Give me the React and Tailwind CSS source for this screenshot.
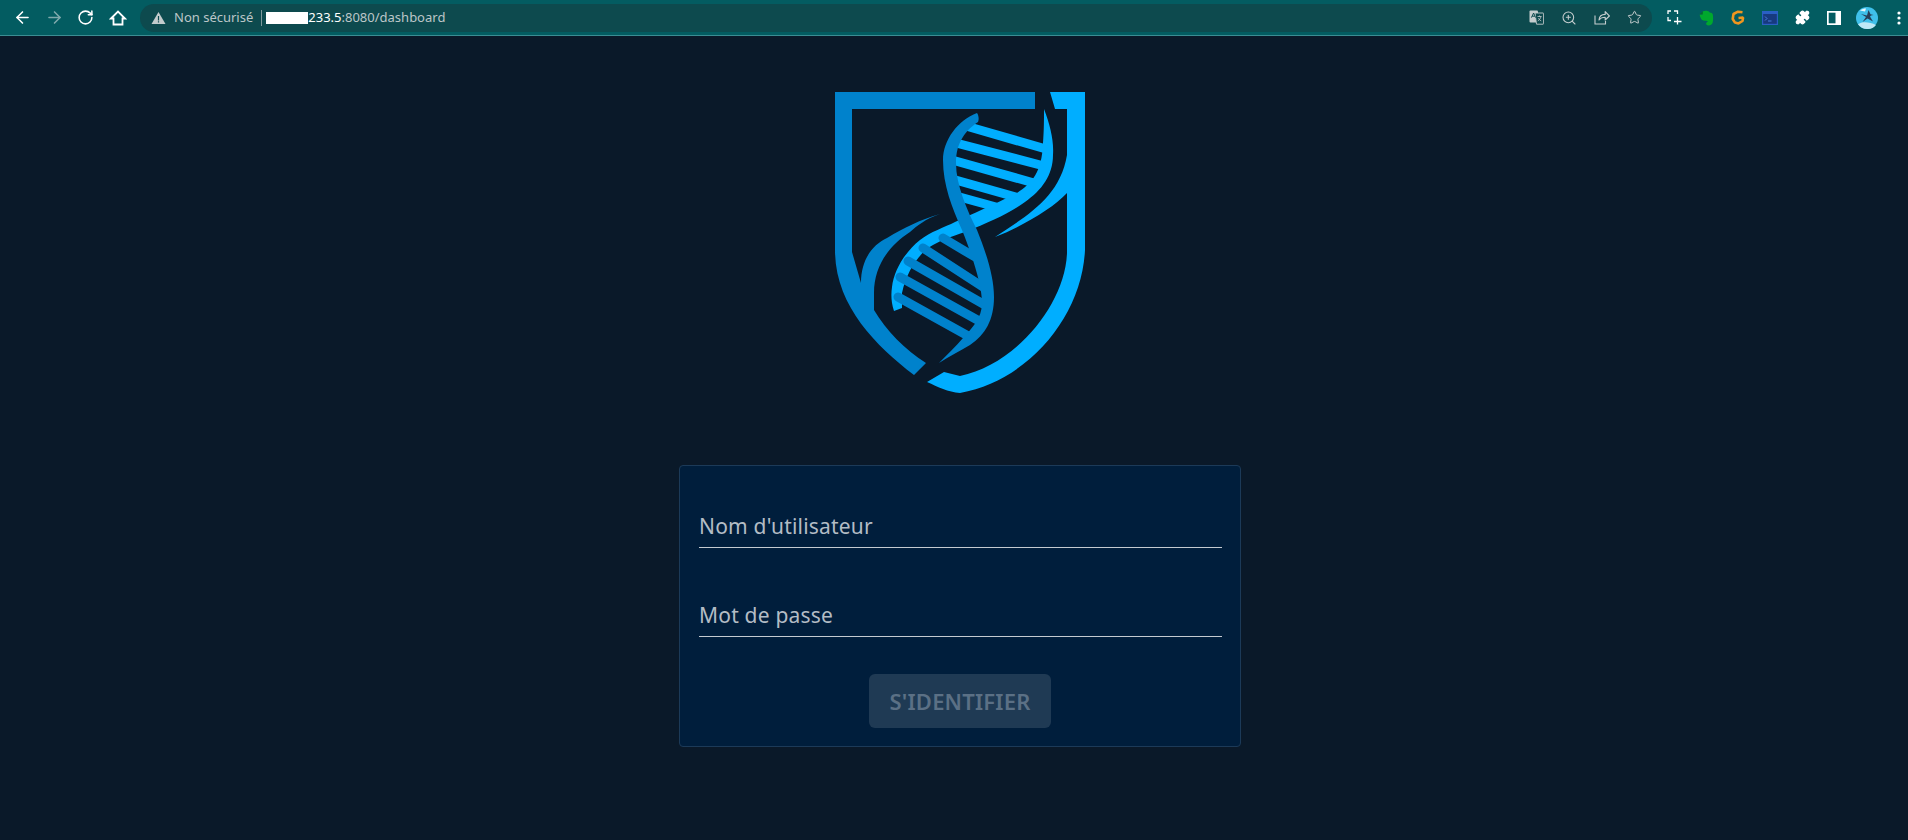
// Login screen inside a Chrome window: toolbar on top, logo and sign-in card below.
import { ArrowLeft, ArrowRight, RotateCw, Star, ZoomIn, Puzzle } from 'lucide-react'

function HomeIcon() {
  return (
    <svg width="18" height="18" viewBox="0 0 18 18" fill="none" stroke="white" strokeWidth="1.8">
      <path d="M2 9.5 9 2.5l7 7h-2.5v6h-9v-6z" strokeLinejoin="miter" />
    </svg>
  )
}

function WarningIcon() {
  return (
    <svg width="15" height="14" viewBox="0 0 15 14">
      <path d="M7.5 1 14.5 13H.5z" fill="#c3cbcc" />
      <path d="M6.9 5h1.2v4.4H6.9zM6.9 10.2h1.2v1.2H6.9z" fill="#0d4a4e" />
    </svg>
  )
}

function TranslateIcon() {
  return (
    <svg width="15" height="15" viewBox="0 0 15 15">
      <rect x="0.5" y="0.5" width="8.5" height="12" rx="1" fill="#c5cdce" />
      <path d="M6 3h8a.6.6 0 0 1 .6.6v10a.6.6 0 0 1-.6.6H7.5z" fill="#0d4a4e" stroke="#c5cdce" strokeWidth="0.9" />
      <path d="M2.4 7.6 4.6 3l2 4.6M3.2 6.2h2.6" fill="none" stroke="#0d4a4e" strokeWidth="1" />
      <path d="M8.5 6.5h4M10.5 5.5v1M12 6.5c-.4 2-1.8 3.6-3.2 4.4M9.4 8.2c.6 1.2 1.6 2.2 2.8 2.7" fill="none" stroke="#c5cdce" strokeWidth="0.8" />
    </svg>
  )
}

function ShareIcon() {
  return (
    <svg width="16" height="15" viewBox="0 0 16 15" fill="none" stroke="#c5cdce" strokeWidth="1.1">
      <path d="M1 5.5V14h10.5v-3" />
      <path d="M5 10c.3-3.6 3-5.6 6.2-5.6V1.6L15.4 6l-4.2 4V7.3C8.6 7.3 6.5 8 5 10z" strokeLinejoin="round" />
    </svg>
  )
}

function CaptureIcon() {
  return (
    <svg width="15" height="15" viewBox="0 0 15 15" fill="none" stroke="white" strokeWidth="1.3">
      <path d="M4 1H1v3M7 1h3.500v3M1 7v3.500h3M10.500 7v7.500M7 11.500h7.500" />
    </svg>
  )
}

function EvernoteIcon() {
  return (
    <svg width="15" height="16" viewBox="0 0 15 16">
      <path d="M3.600 1.600C5 .7 6.800.5 8.500.9c1.300.2 1.800.7 2.200 1.500 1.700.2 2.800.7 3.100 2.200.5 2.800.5 6.300-.3 8.500-.6 1.600-1.900 2.500-3.900 2.500-1.500 0-2.500-.7-2.500-2 0-1.100.8-1.800 2-1.700-.6-.8-1.600-1.200-3.100-1.200C3.600 10.700 2.400 9.800 1.700 8 1 6.800.7 5.800.7 4.500l2.900.1z" fill="#00a82d" />
      <path d="M.8 4.200 3.700 1.300v3z" fill="#066e26" />
    </svg>
  )
}

function GrammarlyLikeIcon() {
  return (
    <svg width="14" height="15" viewBox="0 0 14 15" fill="none" stroke="#f0961e" strokeWidth="2.600">
      <path d="M11.500 2.300 7 1.700 2.500 4 1.700 9 4 12.600l3.500.8 4-2.400.6-3.500-4.600.5" strokeLinejoin="bevel" />
    </svg>
  )
}

function TerminalIcon() {
  return (
    <svg width="16" height="14" viewBox="0 0 16 14">
      <rect width="16" height="14" fill="#2a5fc4" />
      <rect x="1.200" y="3" width="13.600" height="9.800" fill="#173a7f" />
      <path d="M3 5.500 5 7.500 3 9.500" fill="none" stroke="#4f86e8" strokeWidth="0.900" />
      <path d="M6 10h3.500" stroke="#4f86e8" strokeWidth="0.900" />
    </svg>
  )
}

function PanelIcon() {
  return (
    <svg width="14" height="14" viewBox="0 0 14 14">
      <path d="M0 0h14v14H0z" fill="white" />
      <path d="M1.700 1.700h6.800v10.600H1.700z" fill="#035c61" />
    </svg>
  )
}

function AvatarIcon() {
  return (
    <svg width="22" height="22" viewBox="0 0 22 22">
      <circle cx="11" cy="11" r="11" fill="#3fc0ea" />
      <path d="M11 22a11 11 0 0 1-9-4.700C6 14 14 15 20 18a11 11 0 0 1-9 4z" fill="#bfe9f6" />
      <path d="M12.500 3 11 8.500 5 7l5 3-3.500 5 5-3.500 5.500 3-3-5 1-1 2.500-.5-3-.8z" fill="#27405a" />
      <path d="M4 3.500c2-1.500 4-2 6-2l-1 3z" fill="#e8f7fc" />
    </svg>
  )
}

function DotsIcon() {
  return (
    <svg width="4" height="14" viewBox="0 0 4 14" fill="white">
      <circle cx="2" cy="2" r="1.600" />
      <circle cx="2" cy="7" r="1.600" />
      <circle cx="2" cy="12" r="1.600" />
    </svg>
  )
}

// Drawn with page coordinates measured from the screenshot (origin 820,80)
function Logo() {
  return (
    <svg width="250" height="302" viewBox="15 12 250 302" className="shrink-0">
      {/* left half of the shield, with the swoosh that runs off it */}
      <path
        fill="#0082cc"
        d="M15 12H215V29H32V172L41 203C41 180 52 165 67 158C85 147 100 140 120 134C105 139 97 146 90 152C70 165 54 185 54 213V230C66 250 85 270 106 283L94 295C55 265 15 225 15 170Z"
      />
      {/* right half of the shield */}
      <path
        fill="#00aeff"
        d="M230 12H265V170C262 235 210 300 140 313C128 312 118 307 107 302L124 292L140 296C195 285 245 225 247 173V113C233 128 205 145 175 157C205 137 240 118 247 75V29H235Z"
      />
      {/* bright strand and its rungs */}
      <path
        fill="#00aeff"
        d="M224 29C230 45 234 60 233 75C233 95 222 110 205 122C190 133 170 142 145 152C130 157 122 160 113 165C100 172 87 190 82 213V228L74 231C71 222 71 214 72 207C74 190 85 172 100 160C110 152 125 147 135 142C150 135 175 124 197 113C212 103 222 92 223 63C224 50 224 40 224 29Z"
      />
      <g stroke="#00aeff" strokeWidth="9" fill="none">
        <path d="M146 46 226 69" />
        <path d="M136 63 224 86" />
        <path d="M132 80 214 103" />
        <path d="M132 99 199 118" />
        <path d="M136 116 176 127" />
      </g>
      <g stroke="#0082cc" strokeWidth="9" strokeLinecap="round" fill="none">
        <path d="M123 158 155 177" />
        <path d="M103 168 163 207" />
        <path d="M88 181 165 225" />
        <path d="M80 197 161 242" />
        <path d="M78 217 150 257" />
      </g>
      {/* dark strand crosses over everything */}
      <path
        fill="#0082cc"
        d="M157 33C159 36 159 40 158 42C146 50 136 62 136 83C136 105 147 130 157 150C165 170 174 195 174 217C174 240 165 255 150 265C140 271 128 277 119 283C127 275 136 266 143 258C152 248 162 238 162 223C162 205 152 175 142 150C132 128 123 105 123 80C123 60 138 40 157 33Z"
      />
    </svg>
  )
}

export default function App() {
  return (
    <div className="min-h-[840px] bg-[#0a1929] font-['Noto_Sans',sans-serif]">
      {/* Browser toolbar */}
      <div className="flex h-[36px] items-center border-b border-[#3b8d93] bg-[#035c61]">
        <div className="flex w-[140px] shrink-0 items-center gap-[13px] pl-[13px]">
          <ArrowLeft size={19} color="white" strokeWidth={2} />
          <ArrowRight size={19} color="#7fa9ac" strokeWidth={2} />
          <RotateCw size={17} color="white" strokeWidth={2.2} />
          <span className="ml-[2px]">
            <HomeIcon />
          </span>
        </div>
        <div className="flex h-[28px] w-[1512px] shrink-0 items-center rounded-full bg-[#0d4a4e] pl-[11px] pr-[10px] text-[13px] leading-none">
          <WarningIcon />
          <span className="ml-[8px] text-[#bcc6c8]">Non sécurisé</span>
          <span className="ml-[8px] h-[16px] w-px bg-[#7f9a9c]" />
          <span className="ml-[4px] h-[12px] w-[42px] bg-white" />
          <span className="text-white">233.5</span>
          <span className="text-[#bcc6c8]">:8080/dashboard</span>
          <div className="ml-auto flex items-center gap-[17px]">
            <TranslateIcon />
            <ZoomIn size={16} color="#c5cdce" strokeWidth={1.6} />
            <ShareIcon />
            <Star size={15} color="#c5cdce" strokeWidth={1.6} />
          </div>
        </div>
        <div className="ml-[15px] flex items-center gap-[17px]">
          <CaptureIcon />
          <EvernoteIcon />
          <GrammarlyLikeIcon />
          <TerminalIcon />
          <Puzzle size={15} color="white" fill="white" />
          <PanelIcon />
          <span className="-ml-[2px] flex">
            <AvatarIcon />
          </span>
          <span className="ml-[2px] flex">
            <DotsIcon />
          </span>
        </div>
      </div>

      {/* Page */}
      <div className="flex flex-col items-center pl-3">
        <div className="mt-[56px]">
          <Logo />
        </div>
        <div className="mt-[71px] flex h-[282px] w-[562px] flex-col rounded border border-[#1c3a58] bg-[#001e3c] pl-[19px] pr-[18px]">
          <div className="mt-[44px] h-[38px] border-b border-[#c4cad0] text-[21px] leading-[33px] tracking-[0.2px] text-[#b3bcc5]">
            Nom d'utilisateur
          </div>
          <div className="mt-[51px] h-[38px] border-b border-[#c4cad0] text-[21px] leading-[33px] tracking-[0.2px] text-[#b3bcc5]">
            Mot de passe
          </div>
          <button
            disabled
            className="ml-[170px] mt-[37px] h-[54px] w-[182px] rounded-md bg-[#1f3a54] text-[22px] font-semibold tracking-[0.2px] text-[#5b7085]"
          >
            S'IDENTIFIER
          </button>
        </div>
      </div>
    </div>
  )
}
